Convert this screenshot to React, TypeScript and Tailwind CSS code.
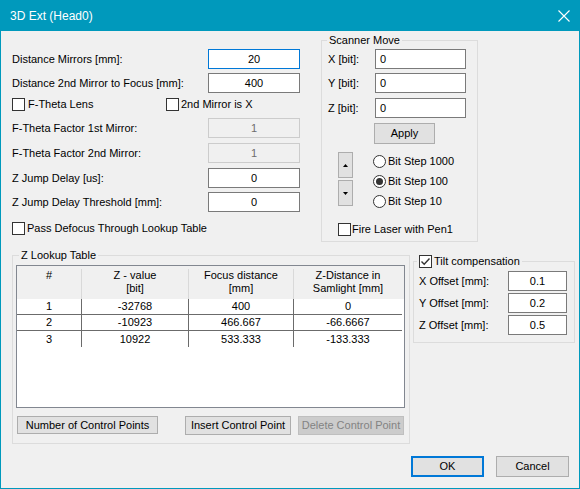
import React from 'react';

type CheckProps = { label: string; checked?: boolean; gap?: string };

function CheckBox({ label, checked = false, gap = 'ml-[3px]' }: CheckProps) {
  return (
    <div className="flex items-center h-[13px]">
      <span className="w-[13px] h-[13px] border border-[#333333] bg-white flex items-center justify-center shrink-0">
        {checked && (
          <svg width="11" height="11" viewBox="0 0 11 11">
            <path d="M1.5 5.5 L4.2 8.2 L9.5 2.5" fill="none" stroke="#333333" strokeWidth="1.4" />
          </svg>
        )}
      </span>
      <span className={`${gap} whitespace-nowrap`}>{label}</span>
    </div>
  );
}

function Radio({ label, checked = false }: { label: string; checked?: boolean }) {
  return (
    <div className="flex items-center h-[20px]">
      <span className="w-[13px] h-[13px] rounded-full border border-[#333333] bg-white flex items-center justify-center shrink-0">
        {checked && <span className="w-[7px] h-[7px] rounded-full bg-[#333333]" />}
      </span>
      <span className="ml-[2px] whitespace-nowrap">{label}</span>
    </div>
  );
}

type FieldProps = {
  label: string;
  value: string;
  focused?: boolean;
  disabled?: boolean;
  className?: string;
};

function FieldRow({ label, value, focused, disabled, className = '' }: FieldProps) {
  const box = disabled
    ? 'bg-[#f0f0f0] border-[#cccccc] text-[#6d6d6d]'
    : focused
      ? 'bg-white border-[#0078d7] text-black'
      : 'bg-white border-[#7a7a7a] text-black';
  return (
    <div className={`flex items-center justify-between h-[20px] ${className}`}>
      <span className="whitespace-nowrap">{label}</span>
      <span className={`w-[92px] h-[20px] border flex items-center justify-center ${box}`}>{value}</span>
    </div>
  );
}

function Btn({ children, className = '', disabled, isDefault }: { children: React.ReactNode; className?: string; disabled?: boolean; isDefault?: boolean }) {
  const look = disabled
    ? 'bg-[#cccccc] border border-[#bfbfbf] text-[#838383]'
    : isDefault
      ? 'bg-[#e1e1e1] border-2 border-[#0078d7] text-black'
      : 'bg-[#e1e1e1] border border-[#adadad] text-black';
  return <div className={`flex items-center justify-center whitespace-nowrap ${look} ${className}`}>{children}</div>;
}

const rows = [
  ['1', '-32768', '400', '0'],
  ['2', '-10923', '466.667', '-66.6667'],
  ['3', '10922', '533.333', '-133.333'],
];

const COLS = ['w-[65px]', 'w-[107px]', 'w-[105px]', 'w-[108px]'];

export default function App() {
  return (
    <div className="w-[580px] h-[489px] border border-[#0099bc] bg-[#f0f0f0] flex flex-col font-['Liberation_Sans',Arial,sans-serif] text-[11px] leading-[13px] text-black overflow-hidden">
      {/* title bar */}
      <div className="h-[30px] bg-[#0099bc] flex items-center justify-between pl-[9px] pr-[9px] text-white text-[12px] shrink-0">
        <span>3D Ext (Head0)</span>
        <svg width="12" height="12" viewBox="0 0 12 12">
          <path d="M0.5 0.5 L11.5 11.5 M11.5 0.5 L0.5 11.5" stroke="white" strokeWidth="1.1" />
        </svg>
      </div>

      <div className="flex flex-col pl-[11px]">
        {/* top section */}
        <div className="flex items-start mt-[3px]">
          <div className="w-[288px] pt-[15px] flex flex-col">
            <FieldRow label="Distance Mirrors [mm]:" value="20" focused />
            <FieldRow label="Distance 2nd Mirror to Focus [mm]:" value="400" className="mt-[4px]" />
            <div className="flex mt-[5px]">
              <div className="w-[154px]">
                <CheckBox label="F-Theta Lens" />
              </div>
              <CheckBox label="2nd Mirror is X" gap="ml-[2px]" />
            </div>
            <FieldRow label="F-Theta Factor  1st Mirror:" value="1" disabled className="mt-[7px]" />
            <FieldRow label="F-Theta Factor  2nd Mirror:" value="1" disabled className="mt-[5px]" />
            <FieldRow label="Z Jump Delay [us]:" value="0" className="mt-[5px]" />
            <FieldRow label="Z Jump Delay Threshold [mm]:" value="0" className="mt-[4px]" />
            <div className="mt-[10px]">
              <CheckBox label="Pass Defocus Through Lookup Table" gap="ml-[2px]" />
            </div>
          </div>

          <fieldset className="ml-[21px] w-[157px] h-[208px] border border-[#dcdcdc] flex flex-col">
            <legend className="ml-[5px] px-[2px]">Scanner Move</legend>
            <div className="flex flex-col mt-[2px]">
              {['X [bit]:', 'Y [bit]:', 'Z [bit]:'].map((l, i) => (
                <div key={l} className={`flex items-center h-[20px] pl-[6px] ${i === 1 ? 'mt-[4px]' : i === 2 ? 'mt-[5px]' : ''}`}>
                  <span className="w-[47px]">{l}</span>
                  <span className="w-[91px] h-[20px] border border-[#7a7a7a] bg-white flex items-center pl-[4px]">0</span>
                </div>
              ))}
              <Btn className="ml-[52px] mt-[5px] w-[61px] h-[21px]">Apply</Btn>
              <div className="flex items-start mt-[8px] pl-[16px]">
                <div className="flex flex-col gap-[2px]">
                  <div className="w-[15px] h-[26px] bg-[#e1e1e1] border border-[#adadad] flex items-center justify-center">
                    <svg width="5" height="3" viewBox="0 0 5 3"><path d="M0 3 L2.5 0 L5 3 Z" fill="#000" /></svg>
                  </div>
                  <div className="w-[15px] h-[26px] bg-[#e1e1e1] border border-[#adadad] flex items-center justify-center">
                    <svg width="5" height="3" viewBox="0 0 5 3"><path d="M0 0 L5 0 L2.5 3 Z" fill="#000" /></svg>
                  </div>
                </div>
                <div className="flex flex-col ml-[20px] -mt-[1px]">
                  <Radio label="Bit Step 1000" />
                  <Radio label="Bit Step 100" checked />
                  <Radio label="Bit Step 10" />
                </div>
              </div>
              <div className="pl-[16px] mt-[12px]">
                <CheckBox label="Fire Laser with Pen1" gap="ml-[1px]" />
              </div>
            </div>
          </fieldset>
        </div>

        {/* lower section */}
        <div className="flex items-start mt-[7px]">
          <fieldset className="w-[398px] border border-[#dcdcdc] flex flex-col pb-[8px]">
            <legend className="ml-[6px] px-[2px]">Z Lookup Table</legend>
            <div className="ml-[3px] mt-[3px] w-[389px] h-[143px] border border-[#828790] bg-white flex flex-col">
              <div className="h-[33px] bg-[#f0f0f0] flex pt-[3px]">
                {[
                  ['#', ''],
                  ['Z - value', '[bit]'],
                  ['Focus distance', '[mm]'],
                  ['Z-Distance in', 'Samlight [mm]'],
                ].map(([a, b], i) => (
                  <div key={a} className={`${COLS[i]} flex flex-col items-center leading-[13px] ${i < 3 ? 'border-r border-[#d9d9d9]' : ''}`}>
                    <span>{a}</span>
                    <span>{b}</span>
                  </div>
                ))}
              </div>
              {rows.map((r, ri) => (
                <div key={r[0]} className={`h-[16px] flex w-[385px] ${ri < 2 ? 'border-b border-[#6b6b6b]' : ''}`}>
                  {r.map((c, ci) => (
                    <div key={ci} className={`${COLS[ci]} flex items-center justify-center ${ci < 3 ? 'border-r border-[#6b6b6b]' : ''}`}>
                      {c}
                    </div>
                  ))}
                </div>
              ))}
            </div>
            <div className="flex items-start mt-[8px] ml-[4px]">
              <Btn className="w-[141px] h-[18px]">Number of Control Points</Btn>
              <Btn className="ml-[27px] w-[106px] h-[19px]">Insert Control Point</Btn>
              <Btn disabled className="ml-[7px] w-[106px] h-[19px]">Delete Control Point</Btn>
            </div>
          </fieldset>

          <fieldset className="ml-[3px] mt-[6px] w-[162px] border border-[#dcdcdc] flex flex-col pb-[7px]">
            <legend className="ml-[3px] px-[2px]">
              <CheckBox label="Tilt compensation" checked gap="ml-[2px]" />
            </legend>
            <div className="flex flex-col mt-[3px] pl-[5px] gap-[2px]">
              {[
                ['X Offset [mm]:', '0.1'],
                ['Y Offset [mm]:', '0.2'],
                ['Z Offset [mm]:', '0.5'],
              ].map(([l, v]) => (
                <div key={l} className="flex items-center h-[20px]">
                  <span className="w-[89px]">{l}</span>
                  <span className="w-[59px] h-[20px] border border-[#7a7a7a] bg-white flex items-center justify-center">{v}</span>
                </div>
              ))}
            </div>
          </fieldset>
        </div>

        {/* dialog buttons */}
        <div className="flex justify-end gap-[12px] pr-[10px] mt-[12px]">
          <Btn isDefault className="w-[73px] h-[21px]">OK</Btn>
          <Btn className="w-[73px] h-[21px]">Cancel</Btn>
        </div>
      </div>
    </div>
  );
}
